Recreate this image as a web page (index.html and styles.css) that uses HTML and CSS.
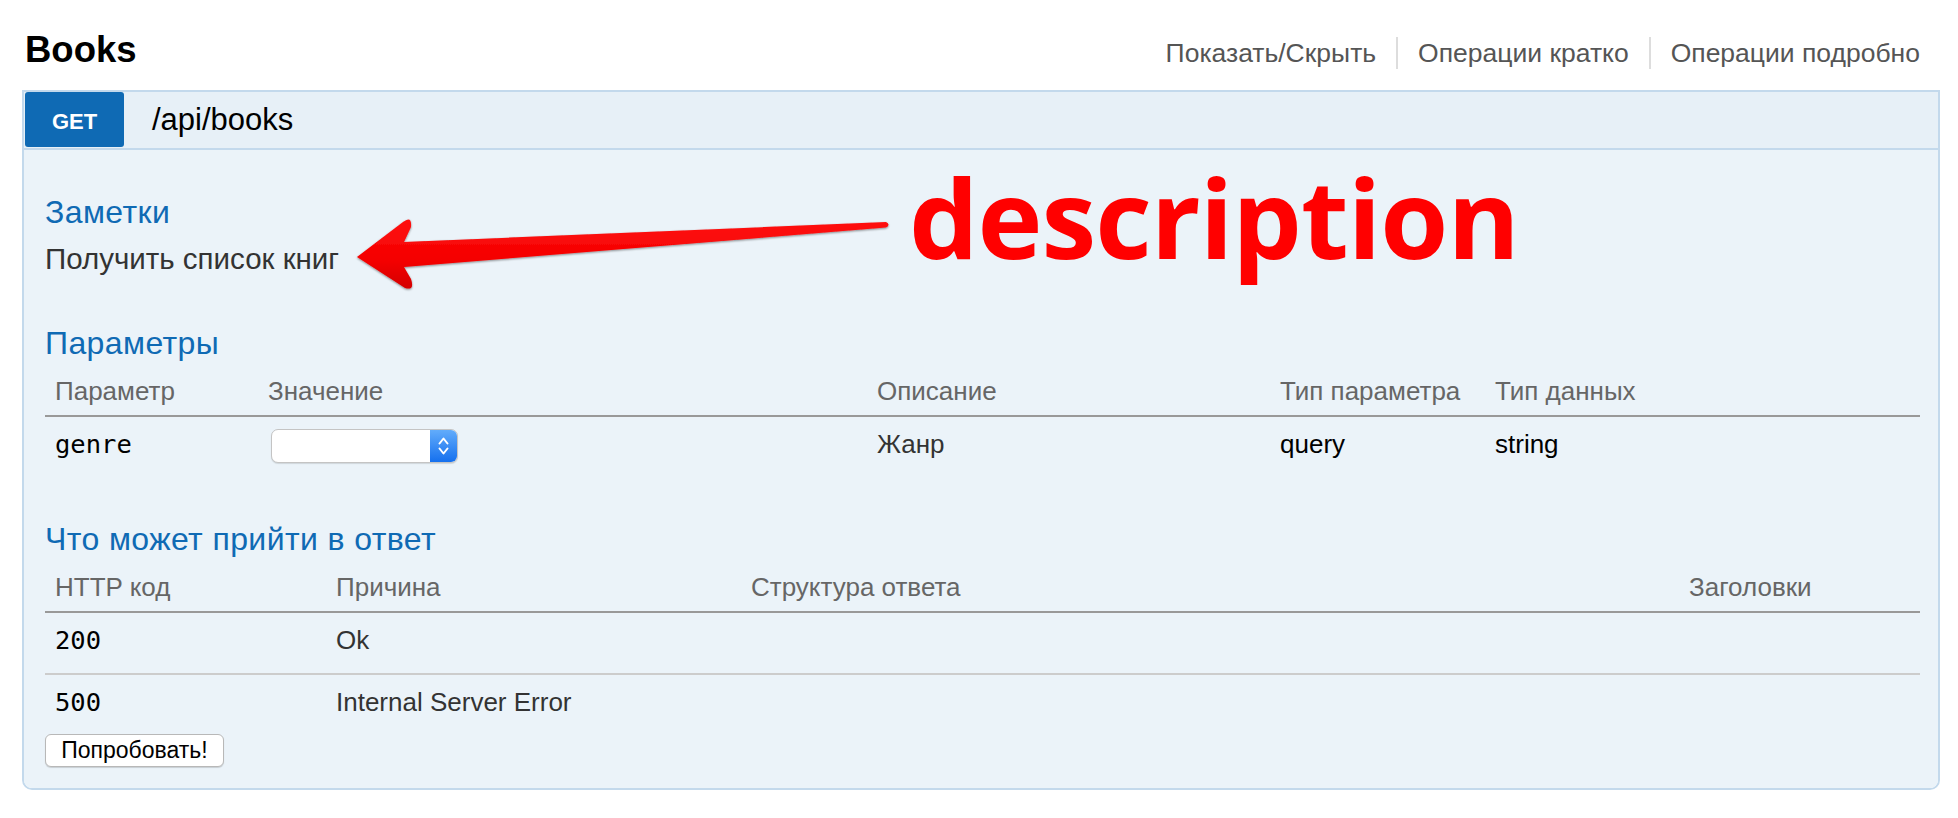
FILE: index.html
```html
<!DOCTYPE html>
<html lang="ru">
<head>
<meta charset="utf-8">
<title>Books</title>
<link rel="stylesheet" href="styles.css">
</head>
<body>
<div class="page">
  <header class="top">
    <h2 class="title">Books</h2>
    <ul class="links">
      <li>Показать/Скрыть</li>
      <li>Операции кратко</li>
      <li>Операции подробно</li>
    </ul>
  </header>

  <section class="op">
    <div class="op-head">
      <span class="method">GET</span>
      <span class="path">/api/books</span>
    </div>
    <div class="op-body">
      <h4 class="sec">Заметки</h4>
      <p class="desc">Получить список книг</p>

      <h4 class="sec sec-params">Параметры</h4>
      <table class="tbl params">
        <colgroup>
          <col class="pc1"><col class="pc2"><col class="pc3"><col class="pc4"><col class="pc5">
        </colgroup>
        <thead>
          <tr><th>Параметр</th><th>Значение</th><th>Описание</th><th>Тип параметра</th><th>Тип данных</th></tr>
        </thead>
        <tbody>
          <tr>
            <td class="code">genre</td>
            <td>
              <div class="select">
                <div class="select-fill"></div>
                <div class="select-btn">
                  <svg width="27" height="34" viewBox="0 0 27 34"><path d="M9.5 14.5 L13.5 9.5 L17.5 14.5 M9.5 19.5 L13.5 24.5 L17.5 19.5" fill="none" stroke="#fff" stroke-width="2" stroke-linecap="round" stroke-linejoin="round"/></svg>
                </div>
              </div>
            </td>
            <td>Жанр</td>
            <td class="dark">query</td>
            <td class="dark">string</td>
          </tr>
        </tbody>
      </table>

      <h4 class="sec sec-resp">Что может прийти в ответ</h4>
      <table class="tbl resp">
        <colgroup>
          <col class="rc1"><col class="rc2"><col class="rc3"><col class="rc4">
        </colgroup>
        <thead>
          <tr><th>HTTP код</th><th>Причина</th><th>Структура ответа</th><th>Заголовки</th></tr>
        </thead>
        <tbody>
          <tr class="sep"><td class="code">200</td><td>Ok</td><td></td><td></td></tr>
          <tr><td class="code">500</td><td>Internal Server Error</td><td></td><td></td></tr>
        </tbody>
      </table>

      <button class="try" type="button">Попробовать!</button>
    </div>
  </section>

  <svg class="annot" viewBox="0 0 1958 818" width="1958" height="818">
    <defs>
      <linearGradient id="ag" x1="0" y1="0" x2="0" y2="1">
        <stop offset="0" stop-color="#ff1010"/>
        <stop offset="0.6" stop-color="#f40000"/>
        <stop offset="1" stop-color="#d40000"/>
      </linearGradient>
      <filter id="sh" x="-5%" y="-20%" width="110%" height="150%">
        <feDropShadow dx="0" dy="1" stdDeviation="0.8" flood-color="#000" flood-opacity="0.45"/>
      </filter>
    </defs>
    <path d="M357 257 L403 222 Q412 215 411 227 L404 242 L886 222 Q891 224.5 886 227.5 L404 267 L411 279 Q415 291 405 288 Z" fill="url(#ag)" filter="url(#sh)"/>
  </svg>
  <div class="annot-text">description</div>
</div>
</body>
</html>
```

FILE: styles.css
```css
html, body {
  margin: 0;
  background: #fff;
}

body {
  font-family: "Liberation Sans", Arial, sans-serif;
  color: #333;
}

.page {
  position: relative;
  padding: 0 18px 0 22px;
}

/* top header */
.top {
  display: flex;
  justify-content: space-between;
  align-items: baseline;
  height: 90px;
  box-sizing: border-box;
  padding: 28px 20px 0 3px;
}

.title {
  margin: 0;
  font-size: 36.5px;
  line-height: 44px;
  font-weight: bold;
  color: #000;
}

.links {
  display: flex;
  list-style: none;
  margin: 0;
  padding: 0;
}

.links li {
  font-size: 26.5px;
  line-height: 32px;
  color: #555;
  padding: 0 20px;
  border-left: 2px solid #ddd;
}

.links li:first-child {
  border-left: 0;
  padding-left: 0;
}

.links li:last-child {
  padding-right: 0;
}

/* operation card */
.op {
  border: 2px solid #c3d9ec;
  border-radius: 0 0 10px 10px;
  overflow: hidden;
}

.op-head {
  display: flex;
  align-items: center;
  height: 56px;
  background: #e7f0f7;
  border-bottom: 2px solid #c3d9ec;
}

.method {
  align-self: flex-start;
  margin-left: 1px;
  width: 99px;
  height: 55px;
  box-sizing: border-box;
  padding-top: 4px;
  display: flex;
  align-items: center;
  justify-content: center;
  background: #0f6ab4;
  color: #fff;
  font-weight: bold;
  font-size: 22px;
  border-radius: 3px;
}

.path {
  margin-left: 28px;
  font-size: 31px;
  color: #000;
}

.op-body {
  background: #ebf3f9;
  padding: 44px 18px 21px 21px;
}

.sec {
  margin: 0;
  font-size: 32px;
  line-height: 36px;
  letter-spacing: 0.4px;
  font-weight: normal;
  color: #0f6ab4;
}

.desc {
  margin: 11.5px 0 0;
  font-size: 29.5px;
  line-height: 34px;
  color: #333;
}

.sec-params {
  margin-top: 49.5px;
}

.sec-resp {
  margin-top: 58px;
}

/* tables */
.tbl {
  width: 100%;
  border-collapse: separate;
  border-spacing: 0;
  table-layout: fixed;
  margin-top: 14px;
}

.tbl th {
  text-align: left;
  font-weight: normal;
  font-size: 26px;
  line-height: 32px;
  color: #666;
  padding: 0 0 8px 10px;
  border-bottom: 2px solid #999;
}

.tbl td {
  vertical-align: top;
  font-size: 26px;
  line-height: 32px;
  color: #333;
  padding: 11px 0 0 10px;
}

.tbl td.code {
  font-family: "DejaVu Sans Mono", "Liberation Mono", monospace;
  font-size: 25.5px;
  color: #000;
}

.tbl td.dark {
  color: #000;
}

.resp tr.sep td {
  padding-bottom: 17px;
  border-bottom: 2px solid #ccc;
}

.pc1 { width: 213px; }
.pc2 { width: 609px; }
.pc3 { width: 403px; }
.pc4 { width: 215px; }
.pc5 { width: 435px; }

.rc1 { width: 281px; }
.rc2 { width: 415px; }
.rc3 { width: 938px; }
.rc4 { width: 241px; }

/* fake select */
.select {
  display: flex;
  width: 187px;
  height: 34px;
  margin: 1px 0 0 3px;
  box-sizing: border-box;
  border: 1px solid #c4c4c4;
  border-radius: 7px;
  background: #fff;
  overflow: hidden;
  box-shadow: 0 1px 1px rgba(0, 0, 0, 0.12);
}

.select-fill {
  flex: 1;
}

.select-btn {
  width: 27px;
  display: flex;
  align-items: center;
  justify-content: center;
  background: linear-gradient(#62acfb, #1570ee);
}

.select-btn svg {
  display: block;
}

/* try button */
.try {
  display: block;
  margin-top: 16px;
  width: 179px;
  height: 33px;
  padding: 0;
  font-family: "Liberation Sans", Arial, sans-serif;
  font-size: 23px;
  color: #000;
  background: #fff;
  border: 1px solid #b8b8b8;
  border-radius: 6px;
  box-shadow: 0 1px 1px rgba(0, 0, 0, 0.15);
}

/* annotation overlay */
.annot {
  position: absolute;
  left: 0;
  top: 0;
  pointer-events: none;
}

.annot-text {
  position: absolute;
  left: 909px;
  top: 161px;
  font-family: "Open Sans", "Liberation Sans", sans-serif;
  font-weight: 700;
  font-size: 110px;
  line-height: 110px;
  letter-spacing: -1px;
  color: #ff0000;
  white-space: nowrap;
}
```
